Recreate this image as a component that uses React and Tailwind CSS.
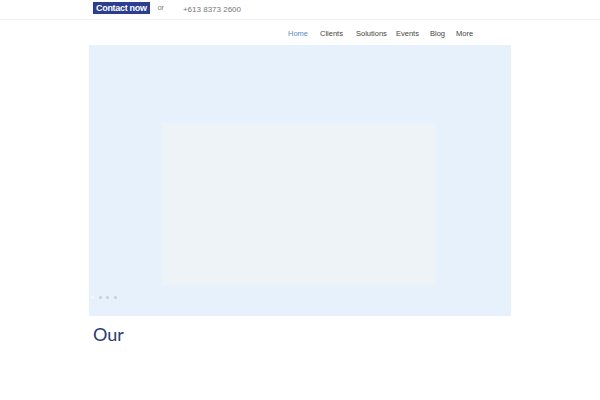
import React from 'react';

export default function App() {
  return (
    <div className="w-[600px] h-[400px] bg-white overflow-hidden" style={{ fontFamily: '"Liberation Sans", Arial, sans-serif' }}>
      {/* top bar */}
      <div className="h-[20px] border-b border-[#f0f0f0] flex items-start">
        <div className="ml-[93px] mt-[2px] h-[12px] px-[3px] bg-[#2c3e8f] text-white text-[9px] leading-[12px] font-bold tracking-[-0.3px]">
          Contact now
        </div>
        <span className="ml-[8px] mt-[3px] text-[7px] text-[#777]">or</span>
        <span className="ml-[19px] mt-[4px] text-[8px] text-[#777]">+613 8373 2600</span>
      </div>

      {/* nav */}
      <div className="h-[25px] pt-[9px] flex items-start">
        <div className="ml-[288px] flex text-[7.5px] leading-[10px] text-[#444]">
          <span className="w-[32px] text-[#5a8cbf]">Home</span>
          <span className="w-[36px]">Clients</span>
          <span className="w-[40px]">Solutions</span>
          <span className="w-[34px]">Events</span>
          <span className="w-[26px]">Blog</span>
          <span>More</span>
        </div>
      </div>

      {/* hero */}
      <div className="ml-[89px] w-[422px] h-[271px] bg-[#e6f1fb] flex flex-col">
        <div className="mt-[77px] ml-[72px] w-[276px] h-[164px] bg-[#eef3f8] border-[3px] border-[#ebf2f9]" />
        <div className="mt-[10px] ml-[2px] flex gap-[4.5px]">
          <span className="w-[3px] h-[3px] rounded-full bg-[#f4f8fc]" />
          <span className="w-[3px] h-[3px] rounded-full bg-[#c3cfdb]" />
          <span className="w-[3px] h-[3px] rounded-full bg-[#c3cfdb]" />
          <span className="w-[3px] h-[3px] rounded-full bg-[#c3cfdb]" />
        </div>
      </div>

      <div className="ml-[93px] mt-[8px] text-[18px] leading-[20px] text-[#2b3a7a]" style={{ fontFamily: 'Lato, sans-serif' }}>
        Our
      </div>
    </div>
  );
}
